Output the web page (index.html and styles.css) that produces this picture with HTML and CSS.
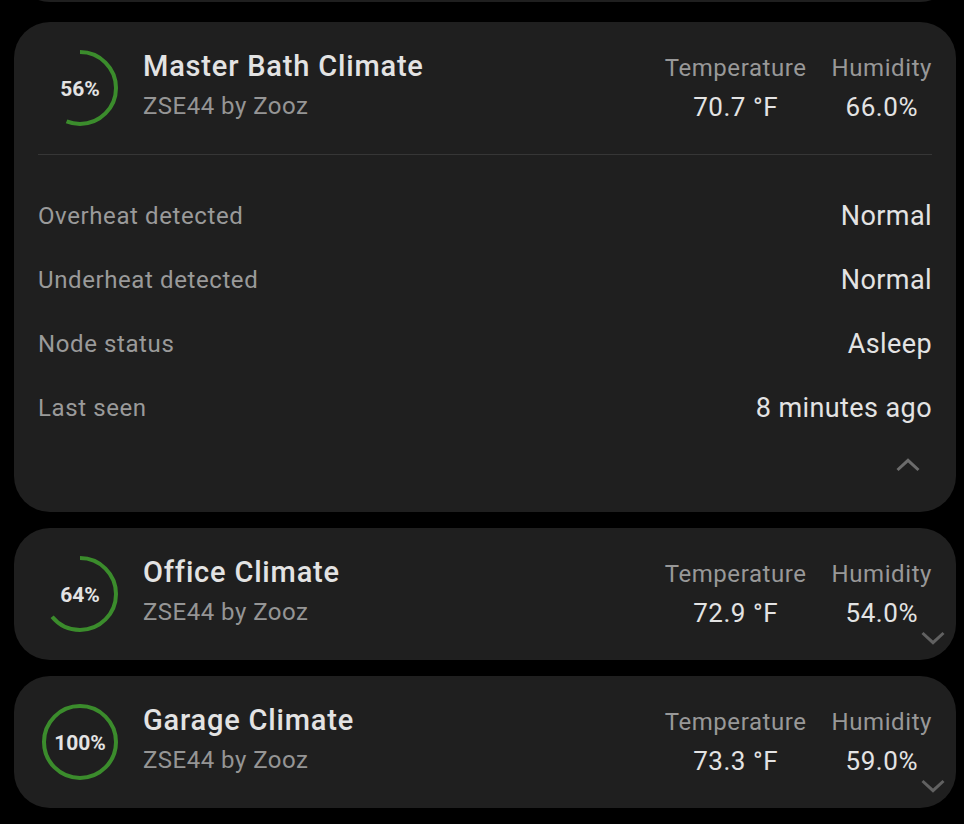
FILE: index.html
```html
<!DOCTYPE html>
<html>
<head>
<meta charset="utf-8">
<link rel="stylesheet" href="styles.css">
</head>
<body>
<div class="list">
  <div class="card stub"></div>

  <div class="card expanded">
    <div class="header">
      <div class="ring">
        <svg viewBox="0 0 80 80" width="80" height="80"><circle class="arc" cx="40" cy="40" r="36" stroke-dasharray="126.67 226.19"/></svg>
        <span class="pct">56%</span>
      </div>
      <div class="names">
        <div class="title">Master Bath Climate</div>
        <div class="subtitle">ZSE44 by Zooz</div>
      </div>
      <div class="stats">
        <div class="stat"><div class="label">Temperature</div><div class="value">70.7 °F</div></div>
        <div class="stat"><div class="label">Humidity</div><div class="value">66.0%</div></div>
      </div>
    </div>
    <div class="divider"></div>
    <div class="rows">
      <div class="row"><span class="rlabel">Overheat detected</span><span class="rvalue">Normal</span></div>
      <div class="row"><span class="rlabel">Underheat detected</span><span class="rvalue">Normal</span></div>
      <div class="row"><span class="rlabel">Node status</span><span class="rvalue">Asleep</span></div>
      <div class="row"><span class="rlabel">Last seen</span><span class="rvalue">8 minutes ago</span></div>
    </div>
    <div class="footer">
      <div class="chev-btn"><svg viewBox="0 0 24 24" width="24" height="24"><path d="M1.5 16 L12 6.3 L22.5 16" class="chev"/></svg></div>
    </div>
  </div>

  <div class="card collapsed">
    <div class="header">
      <div class="ring">
        <svg viewBox="0 0 80 80" width="80" height="80"><circle class="arc" cx="40" cy="40" r="36" stroke-dasharray="144.76 226.19"/></svg>
        <span class="pct">64%</span>
      </div>
      <div class="names">
        <div class="title">Office Climate</div>
        <div class="subtitle">ZSE44 by Zooz</div>
      </div>
      <div class="stats">
        <div class="stat"><div class="label">Temperature</div><div class="value">72.9 °F</div></div>
        <div class="stat"><div class="label">Humidity</div><div class="value">54.0%</div></div>
      </div>
    </div>
    <div class="chev-btn corner"><svg viewBox="0 0 24 24" width="24" height="24"><path d="M1.5 8 L12 17.7 L22.5 8" class="chev"/></svg></div>
  </div>

  <div class="card collapsed">
    <div class="header">
      <div class="ring">
        <svg viewBox="0 0 80 80" width="80" height="80"><circle class="arc" cx="40" cy="40" r="36" stroke-dasharray="226.2 226.19"/></svg>
        <span class="pct">100%</span>
      </div>
      <div class="names">
        <div class="title">Garage Climate</div>
        <div class="subtitle">ZSE44 by Zooz</div>
      </div>
      <div class="stats">
        <div class="stat"><div class="label">Temperature</div><div class="value">73.3 °F</div></div>
        <div class="stat"><div class="label">Humidity</div><div class="value">59.0%</div></div>
      </div>
    </div>
    <div class="chev-btn corner"><svg viewBox="0 0 24 24" width="24" height="24"><path d="M1.5 8 L12 17.7 L22.5 8" class="chev"/></svg></div>
  </div>
</div>
</body>
</html>
```

FILE: styles.css
```css
html, body {
  margin: 0;
  padding: 0;
  background: #000;
  font-family: Roboto, "Noto Sans", "Liberation Sans", sans-serif;
  overflow: hidden;
}

.list {
  display: flex;
  flex-direction: column;
  gap: 16px;
  padding: 0 8px 0 14px;
}

.card {
  position: relative;
  background: #1f1f1f;
  border-radius: 36px;
  padding: 0 24px;
}

.card.stub {
  height: 100px;
  margin-top: -98px;
  margin-bottom: 4px;
  padding: 0;
}

.header {
  display: flex;
  align-items: flex-start;
  padding: 26px 0;
}

.ring {
  position: relative;
  width: 80px;
  height: 80px;
  margin-left: 2px;
  flex: none;
}

.ring svg {
  display: block;
  transform: rotate(-90deg);
}

.arc {
  fill: none;
  stroke: #3b8c2c;
  stroke-width: 4;
}

.pct {
  position: absolute;
  inset: 0;
  display: flex;
  align-items: center;
  justify-content: center;
  color: #e3e3e3;
  font-size: 21px;
  font-weight: 700;
  padding-top: 2px;
}

.names {
  margin-left: 23px;
  flex: 1;
  padding-top: 1px;
}

.title {
  color: #e3e3e3;
  font-size: 29px;
  font-weight: 500;
  line-height: 34px;
  letter-spacing: 0.028em;
}

.subtitle {
  color: #959595;
  font-size: 24px;
  line-height: 32px;
  margin-top: 7px;
  letter-spacing: 0.02em;
}

.stats {
  display: flex;
  gap: 25px;
}

.stat {
  text-align: center;
}

.label {
  color: #989898;
  font-size: 24px;
  line-height: 32px;
  margin-top: 4px;
  letter-spacing: 0.024em;
}

.value {
  color: #e3e3e3;
  font-size: 26px;
  line-height: 34px;
  margin-top: 6px;
  letter-spacing: 0.02em;
}

.divider {
  height: 1px;
  background: #363636;
}

.rows {
  padding-top: 28px;
}

.row {
  display: flex;
  justify-content: space-between;
  align-items: baseline;
  height: 64px;
  line-height: 64px;
}

.rlabel {
  color: #9a9a9a;
  font-size: 24px;
  letter-spacing: 0.025em;
}

.rvalue {
  color: #e3e3e3;
  font-size: 27px;
  letter-spacing: 0.015em;
  position: relative;
  top: 1px;
}

.footer {
  display: flex;
  justify-content: flex-end;
  padding-top: 3px;
  padding-bottom: 22px;
}

.chev-btn {
  width: 48px;
  height: 48px;
  display: flex;
  align-items: center;
  justify-content: center;
}

.chev {
  fill: none;
  stroke: #6c6c6c;
  stroke-width: 3;
}

.chev-btn.corner {
  position: absolute;
  right: -1px;
  bottom: -1px;
}

.chev-btn.corner .chev {
  stroke: #616161;
}
```
